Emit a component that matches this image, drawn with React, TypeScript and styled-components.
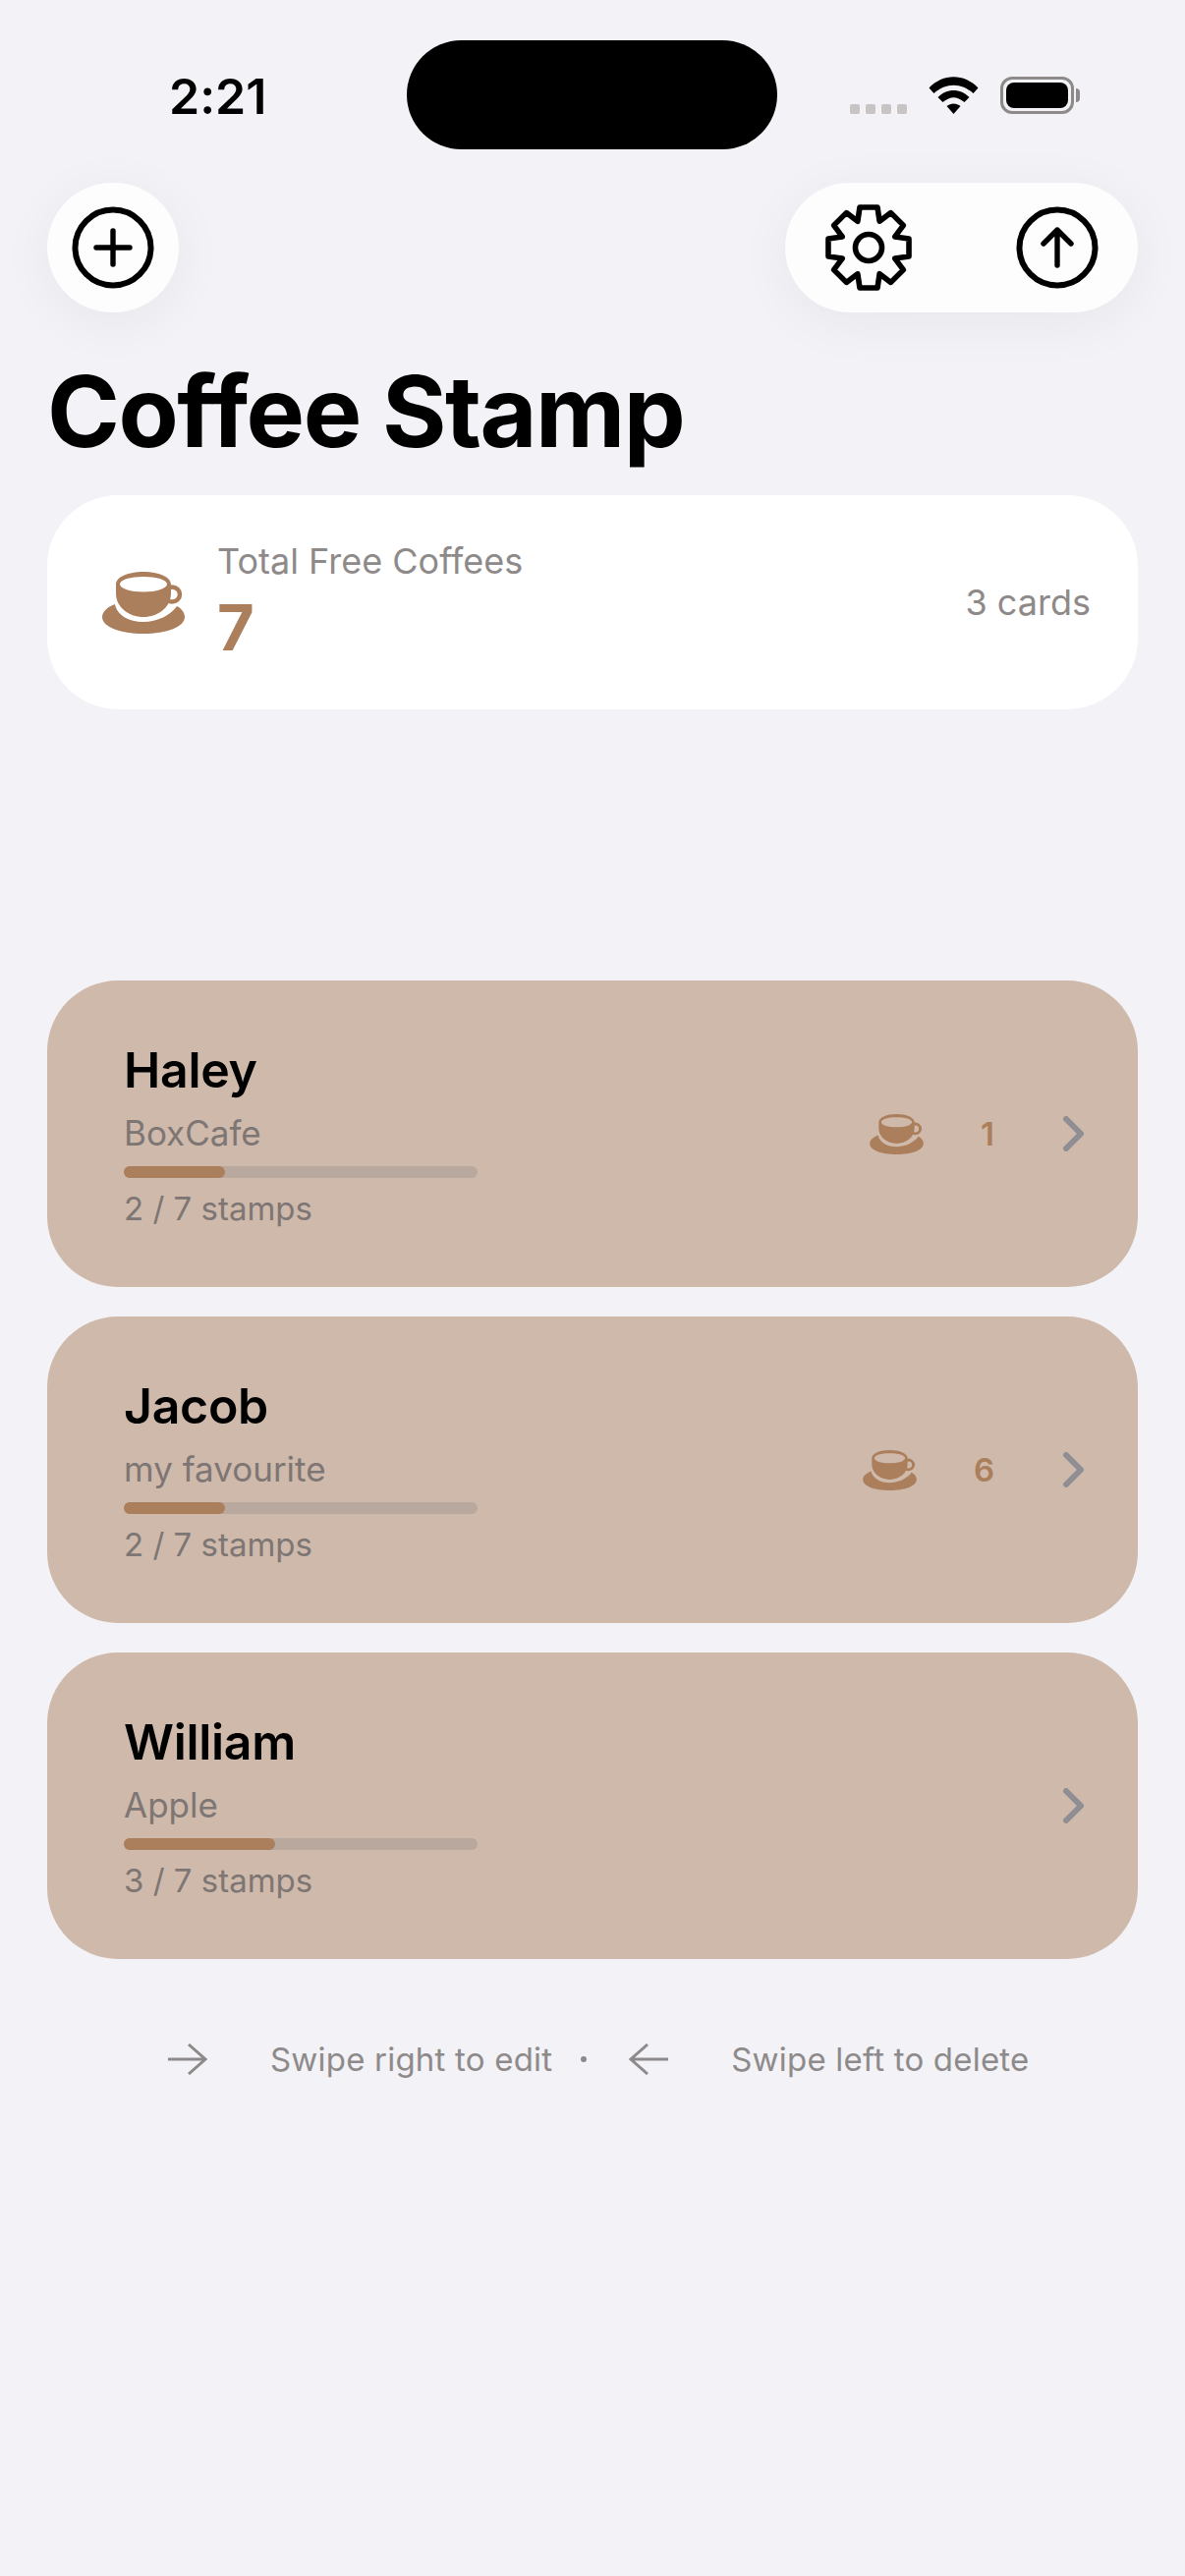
import React from 'react'
import styled, { createGlobalStyle } from 'styled-components'

const GlobalStyle = createGlobalStyle`
  html, body {
    margin: 0;
    padding: 0;
    background: #f2f2f7;
  }
  * {
    box-sizing: border-box;
  }
`

const cards = [
  { name: 'Haley', shop: 'BoxCafe', stamps: 2, free: 1 },
  { name: 'Jacob', shop: 'my favourite', stamps: 2, free: 6 },
  { name: 'William', shop: 'Apple', stamps: 3, free: 0 }
]

// 8 tapered teeth, one valley point between each pair
const gearPoints = Array.from({ length: 8 }, (_, i) => {
  const axis = i * 45 - 90
  return [[axis - 12.4, 42], [axis + 12.4, 42], [axis + 22.5, 29]]
    .map(([deg, r]) => {
      const rad = (deg * Math.PI) / 180
      return `${(r * Math.cos(rad)).toFixed(2)},${(r * Math.sin(rad)).toFixed(2)}`
    })
    .join(' ')
}).join(' ')

function CupIcon ({ className }: { className?: string }) {
  return (
    <svg className={className} viewBox='0 0 84 63' fill='#ab7e5c'>
      <path d='M13 33C5 36 0 41 0 46C0 56 18 63 42 63C66 63 84 56 84 46C84 41 80 37 76 35C70 44 56 51 42 51C27 51 15 44 13 33Z' />
      <path
        fillRule='evenodd'
        d='M14 13C14 5 27 0 42 0C57 0 70 5 70 13V22C70 36 57 46 42 46C27 46 14 36 14 22ZM18 12.500C18 17 29 20.500 42 20.500C55 20.500 66 17 66 12.500C66 8 55 5 42 5C29 5 18 8 18 12.500Z'
      />
      <ellipse cx='71' cy='23' rx='8' ry='7.500' fill='none' stroke='#ab7e5c' strokeWidth='4.500' />
    </svg>
  )
}

function CircleGlyph ({ d }: { d: string }) {
  return (
    <ToolIcon viewBox='0 0 84 84'>
      <circle cx='42' cy='42' r='38.500' strokeWidth='6' />
      <path d={d} />
    </ToolIcon>
  )
}

export default function App () {
  return (
    <Page>
      <GlobalStyle />
      <StatusBar>
        <Time>2:21</Time>
        <Island />
        <StatusIcons>
          <SignalDots>
            <Dot /><Dot /><Dot /><Dot />
          </SignalDots>
          <svg width='51' height='38' viewBox='0 0 50 38'>
            <path d='M0 11.500C14 -3.500 36 -3.500 50 11.500L45 17C33 6 17 6 5 17Z' />
            <path d='M9 21C18 11.500 32 11.500 41 21L36 26C28 19.500 22 19.500 14 26Z' />
            <path d='M18 30C22 26.500 28 26.500 32 30L25 38Z' />
          </svg>
          <Battery>
            <BatteryFill />
          </Battery>
        </StatusIcons>
      </StatusBar>

      <ButtonRow>
        <RoundButton>
          <CircleGlyph d='M42 25V59M25 42H59' />
        </RoundButton>
        <ActionPill>
          <GearIcon viewBox='-48 -48 96 96'>
            <polygon points={gearPoints} />
            <circle r='13.500' />
          </GearIcon>
          <CircleGlyph d='M42 60V24M28 38L42 24L56 38' />
        </ActionPill>
      </ButtonRow>

      <Title>Coffee Stamp</Title>

      <TotalCard>
        <TotalCup />
        <TotalText>
          <TotalLabel>Total Free Coffees</TotalLabel>
          <TotalValue>7</TotalValue>
        </TotalText>
        <CardCount>3 cards</CardCount>
      </TotalCard>

      <CardList>
        {cards.map(card => (
          <StampCard key={card.name}>
            <CardInfo>
              <Name>{card.name}</Name>
              <Shop>{card.shop}</Shop>
              <Track>
                <Fill style={{ width: `${(card.stamps / 7) * 100}%` }} />
              </Track>
              <Stamps>{card.stamps} / 7 stamps</Stamps>
            </CardInfo>
            {card.free > 0 && (
              <FreeGroup>
                <SmallCup />
                <FreeCount>{card.free}</FreeCount>
              </FreeGroup>
            )}
            <Chevron viewBox='0 0 21 36'>
              <path d='M3 3L18 18L3 33' />
            </Chevron>
          </StampCard>
        ))}
      </CardList>

      <Hint>
        <HintArrow viewBox='0 0 40 32'>
          <path d='M0 16H38M21 1L38 16L21 31' />
        </HintArrow>
        <HintText>Swipe right to edit</HintText>
        <HintDot />
        <HintArrow $left viewBox='0 0 40 32'>
          <path d='M0 16H38M21 1L38 16L21 31' />
        </HintArrow>
        <HintText>Swipe left to delete</HintText>
      </Hint>
    </Page>
  )
}

const Page = styled.div`
  width: 1206px;
  height: 2622px;
  padding: 0 48px;
  overflow: hidden;
  background: #f2f2f7;
  font-family: Inter, "Liberation Sans", sans-serif;
  font-variant-ligatures: none;
  font-feature-settings: "calt" 0;
  color: #000;
`

const StatusBar = styled.div`
  display: grid;
  grid-template-columns: 366px 377px 1fr;
  height: 186px;
  padding-top: 41px;
`

const Time = styled.div`
  padding: 29px 0 0 124px;
  font-size: 50px;
  line-height: 56px;
  font-weight: 600;
`

const Island = styled.div`
  width: 377px;
  height: 111px;
  border-radius: 56px;
  background: #000;
`

const StatusIcons = styled.div`
  display: flex;
  align-items: flex-start;
  padding: 37px 0 0 74px;
`

const SignalDots = styled.div`
  display: flex;
  gap: 6px;
  margin-top: 28px;
  margin-right: 22px;
`

const Dot = styled.div`
  width: 10px;
  height: 10px;
  border-radius: 2px;
  background: #c9c4c4;
`

const Battery = styled.div`
  position: relative;
  width: 75px;
  height: 38px;
  margin-left: 22px;
  padding: 3px;
  border: 3px solid #8e8a8a;
  border-radius: 12px;

  &::after {
    content: '';
    position: absolute;
    top: 9px;
    right: -9px;
    width: 4px;
    height: 14px;
    border-radius: 0 4px 4px 0;
    background: #8e8a8a;
  }
`

const BatteryFill = styled.div`
  height: 100%;
  border-radius: 8px;
  background: #000;
`

const ButtonRow = styled.div`
  display: flex;
  justify-content: space-between;
`

const RoundButton = styled.div`
  display: flex;
  align-items: center;
  justify-content: center;
  width: 134px;
  height: 132px;
  border-radius: 66px;
  background: #fdfdfd;
  box-shadow: 0 10px 56px rgba(0, 0, 0, 0.05);
`

const ActionPill = styled.div`
  display: flex;
  align-items: center;
  justify-content: space-between;
  width: 359px;
  height: 132px;
  padding: 0 40px 0 37px;
  border-radius: 66px;
  background: #fdfdfd;
  box-shadow: 0 10px 56px rgba(0, 0, 0, 0.05);
`

const ToolIcon = styled.svg`
  width: 84px;
  height: 84px;
  fill: none;
  stroke: #000;
  stroke-width: 5.4;
  stroke-linecap: round;
  stroke-linejoin: round;
`

const GearIcon = styled.svg`
  width: 96px;
  height: 96px;
  fill: none;
  stroke: #000;
  stroke-width: 5.6;
  stroke-linejoin: round;
`

const Title = styled.h1`
  margin: 41px 0 0;
  font-size: 100px;
  line-height: 120px;
  font-weight: 700;
  letter-spacing: -1.5px;
`

const TotalCard = styled.div`
  display: flex;
  align-items: center;
  height: 218px;
  margin-top: 25px;
  padding: 0 48px 0 56px;
  border-radius: 72px;
  background: #fff;
`

const TotalCup = styled(CupIcon)`
  width: 84px;
  height: 63px;
`

const TotalText = styled.div`
  flex: 1;
  margin-left: 33px;
`

const TotalLabel = styled.div`
  font-size: 36px;
  line-height: 44px;
  color: #8e8a8a;
`

const TotalValue = styled.div`
  margin-top: 8px;
  font-size: 65px;
  line-height: 76px;
  font-weight: 700;
  color: #ab7e5c;
`

const CardCount = styled.div`
  font-size: 36px;
  color: #8e8a8a;
`

const CardList = styled.div`
  display: flex;
  flex-direction: column;
  gap: 30px;
  margin-top: 276px;
`

const StampCard = styled.div`
  display: flex;
  align-items: center;
  height: 312px;
  padding: 0 55px 0 78px;
  border-radius: 72px;
  background: #cfb9aa;
`

const CardInfo = styled.div`
  flex: 1;
`

const Name = styled.div`
  font-size: 50px;
  line-height: 60px;
  font-weight: 600;
  letter-spacing: -0.3px;
`

const Shop = styled.div`
  margin-top: 14px;
  font-size: 35px;
  line-height: 40px;
  color: #7d7674;
`

const Track = styled.div`
  width: 360px;
  height: 12px;
  margin-top: 14px;
  border-radius: 6px;
  background: #b9a89d;
`

const Fill = styled.div`
  height: 100%;
  border-radius: 6px;
  background: #ab7e5c;
`

const Stamps = styled.div`
  margin-top: 12px;
  font-size: 33px;
  line-height: 38px;
  color: #7d7674;
`

const FreeGroup = styled.div`
  display: flex;
  align-items: center;
  gap: 58px;
  margin-right: 70px;
`

const SmallCup = styled(CupIcon)`
  width: 55px;
  height: 41px;
`

const FreeCount = styled.div`
  font-size: 33px;
  font-weight: 600;
  color: #ab7e5c;
`

const Chevron = styled.svg`
  width: 21px;
  height: 36px;
  fill: none;
  stroke: #8e8e93;
  stroke-width: 6;
  stroke-linecap: round;
  stroke-linejoin: round;
`

const Hint = styled.div`
  display: flex;
  align-items: center;
  margin-top: 82px;
  padding-left: 123px;
  color: #8e8a8a;
`

const HintArrow = styled.svg<{ $left?: boolean }>`
  width: 40px;
  height: 32px;
  fill: none;
  stroke: #8e8a8a;
  stroke-width: 3;
  transform: ${props => (props.$left ? 'scaleX(-1)' : 'none')};
`

const HintText = styled.div`
  margin-left: 64px;
  font-size: 33px;
  line-height: 40px;
  letter-spacing: 0.2px;
`

const HintDot = styled.div`
  width: 6px;
  height: 6px;
  margin: 0 43px 0 29px;
  border-radius: 50%;
  background: #8e8a8a;
`
